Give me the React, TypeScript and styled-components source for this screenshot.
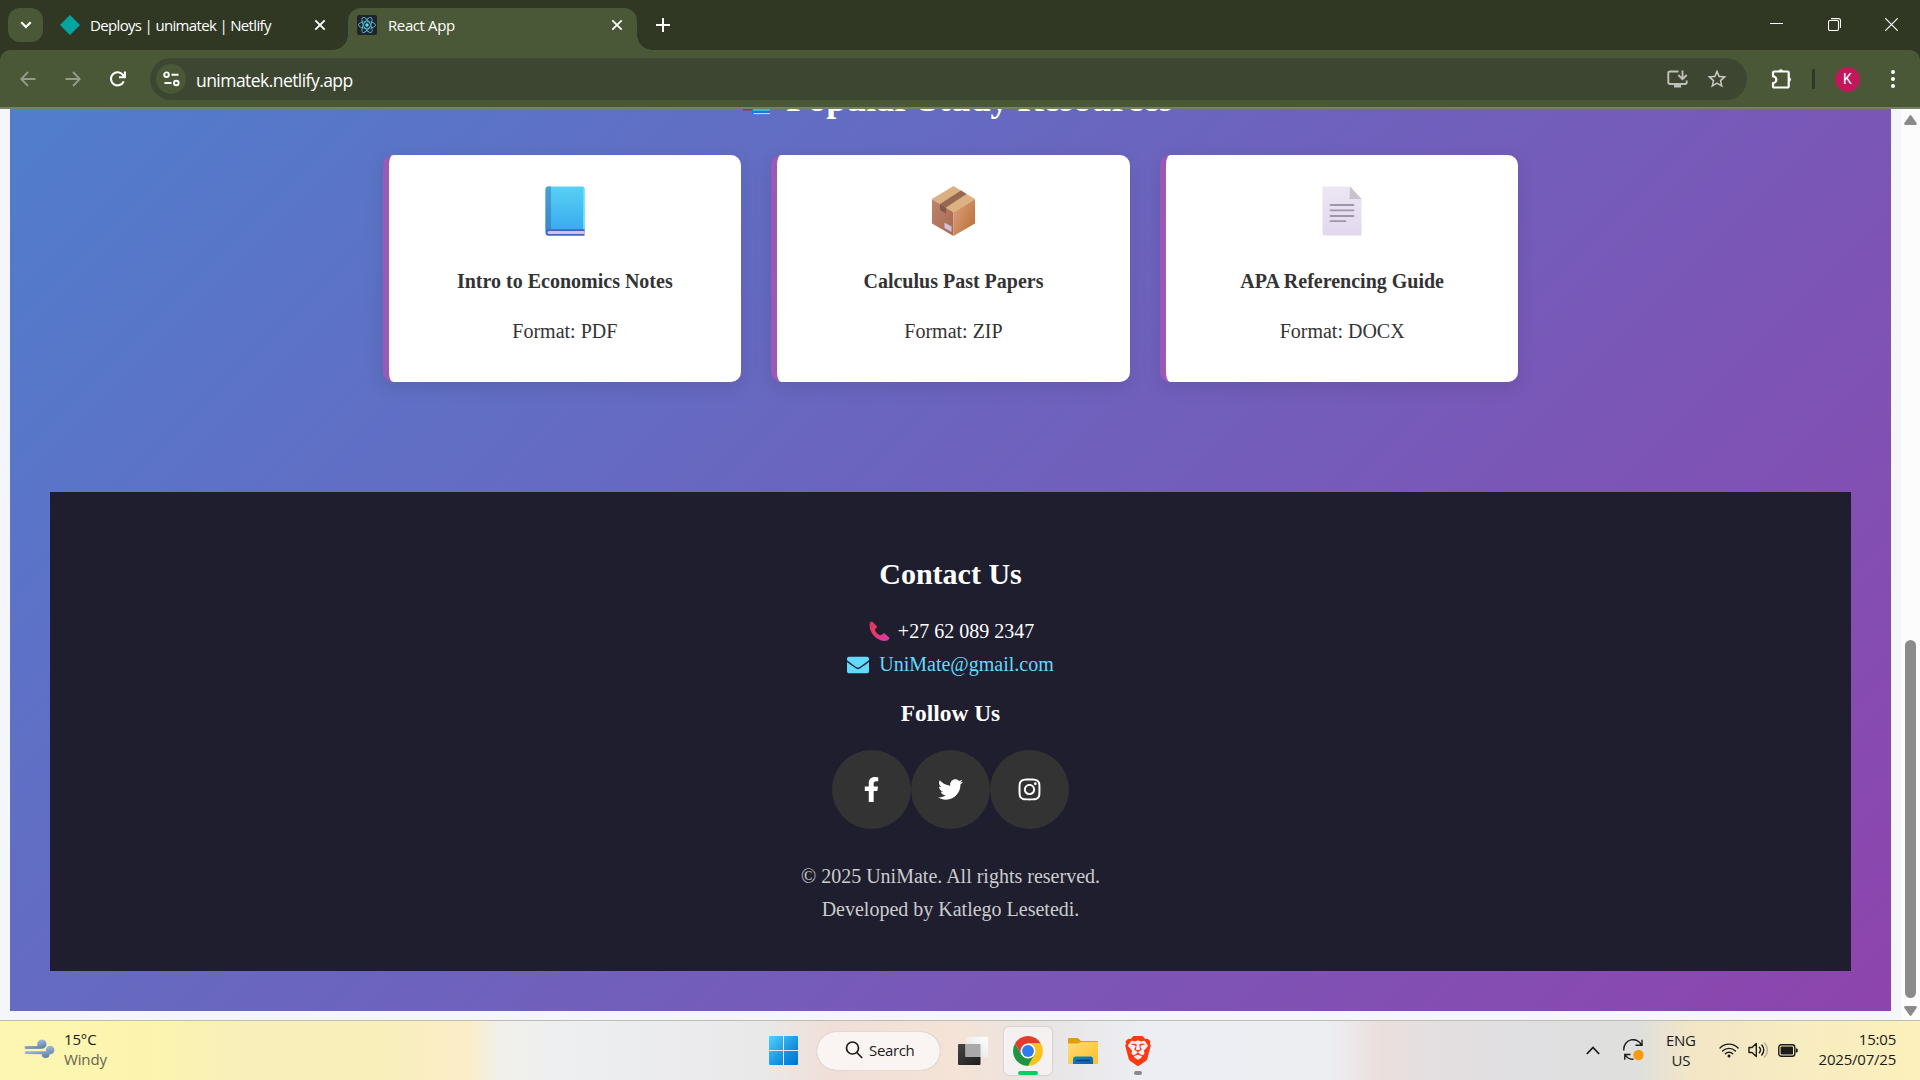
import React from "react";
import styled, { createGlobalStyle } from "styled-components";
import { FaFacebookF, FaTwitter, FaInstagram, FaEnvelope } from "react-icons/fa";
import { SiBrave } from "react-icons/si";

const GlobalStyle = createGlobalStyle`
  * { box-sizing: border-box; }
  body { margin: 0; overflow: hidden; }
`;

const UI_FONT = '"Open Sans", "Noto Sans", sans-serif';
const PAGE_FONT = '"Liberation Serif", "Times New Roman", serif';

const Screen = styled.div`
  width: 1920px;
  height: 1080px;
  display: flex;
  flex-direction: column;
  overflow: hidden;
  background: #303824;
  font-family: ${UI_FONT};
`;

/* ---------- Browser chrome ---------- */

const TabStrip = styled.div`
  height: 50px;
  display: flex;
  padding: 8px 22px 0 8px;
  color: #fff;
`;

const TabSearch = styled.div`
  width: 35px;
  height: 34px;
  border-radius: 12px;
  background: #4b5837;
  display: grid;
  place-items: center;
`;

const Tab = styled.div<{ $active?: boolean; $width: number }>`
  position: relative;
  width: ${(p) => p.$width}px;
  height: 42px;
  margin-left: ${(p) => (p.$active ? 0 : 7)}px;
  padding: ${(p) => (p.$active ? "0 14px 8px 9px" : "0 22px 8px 10px")};
  display: flex;
  align-items: center;
  border-radius: 13px 13px 0 0;
  background: ${(p) => (p.$active ? "#4b5837" : "transparent")};

  &::before,
  &::after {
    content: "";
    display: ${(p) => (p.$active ? "block" : "none")};
    position: absolute;
    bottom: 0;
    width: 15px;
    height: 15px;
  }
  &::before {
    left: -15px;
    background: radial-gradient(circle at 0 0, transparent 14.5px, #4b5837 15px);
  }
  &::after {
    right: -15px;
    background: radial-gradient(circle at 100% 0, transparent 14.5px, #4b5837 15px);
  }
`;

const TabTitle = styled.span<{ $gap: number; $spacing: number }>`
  flex: 1;
  margin-left: ${(p) => p.$gap}px;
  font-size: 15px;
  line-height: 20px;
  letter-spacing: ${(p) => p.$spacing}px;
  white-space: nowrap;
`;

const NewTab = styled.div`
  display: flex;
  margin: 10px 0 0 19px;
  height: 14px;
`;

const WindowControls = styled.div`
  margin-left: auto;
  display: flex;
  gap: 44.500px;
  padding-top: 10px;
  height: 24px;
`;

const Toolbar = styled.div`
  height: 59px;
  display: flex;
  align-items: center;
  padding: 1px 20px 0;
  background: #4b5837;
  border-bottom: 2px solid #748163;
  border-radius: 10px 10px 0 0;
`;

const NavButtons = styled.div`
  display: flex;
  gap: 29px;
  width: 130px;
`;

const Omnibox = styled.div`
  width: 1597px;
  height: 42px;
  border-radius: 21px;
  background: #3c4630;
  display: flex;
  align-items: center;
  padding: 0 20px 0 6px;
`;

const SiteButton = styled.div`
  width: 30px;
  height: 30px;
  border-radius: 50%;
  background: #4b5837;
  display: grid;
  place-items: center;
`;

const Address = styled.span`
  flex: 1;
  margin-left: 10px;
  padding-top: 1px;
  color: #fff;
  font-size: 17.5px;
  letter-spacing: -0.55px;
`;

const OmniboxActions = styled.div`
  display: flex;
  gap: 19px;
  align-items: center;
`;

const ToolbarActions = styled.div`
  flex: 1;
  display: flex;
  align-items: center;
  padding-left: 24px;
`;

const Divider = styled.div`
  width: 3px;
  height: 20px;
  margin: 0 20px 0 19px;
  border-radius: 1px;
  background: #303824;
`;

const Avatar = styled.div`
  width: 25px;
  height: 25px;
  border-radius: 50%;
  background: #c2185b;
  color: #fff;
  font: 14px/25px Roboto, sans-serif;
  text-align: center;
  margin-right: 31px;
`;

/* ---------- Page ---------- */

const Viewport = styled.div`
  height: 911px;
  display: flex;
  overflow: hidden;
  background: #f4f6f9;
`;

const Body = styled.div`
  flex: 1;
  min-width: 0;
  height: 911px;
  padding: 0 10px 9px;
  display: flex;
  flex-direction: column;
`;

const Gradient = styled.main`
  flex: 1;
  min-height: 0;
  overflow: hidden;
  display: flex;
  flex-direction: column;
  justify-content: flex-end;
  padding: 0 40px 40px;
  background: linear-gradient(135deg, #3498db, #8e44ad) bottom / 100% 2195px no-repeat;
  font-family: ${PAGE_FONT};
  font-size: 20px;
`;

const SectionTitle = styled.h2`
  flex: none;
  display: flex;
  justify-content: center;
  gap: 9px;
  margin: 0 0 35px;
  height: 42px;
  line-height: 42px;
  font-size: 36px;
  color: #fff;
`;

const CardGrid = styled.section`
  flex: none;
  width: 1136px;
  margin: 0 auto 110px;
  display: grid;
  grid-template-columns: repeat(3, 1fr);
  gap: 30px;
`;

const Card = styled.article`
  height: 227px;
  padding-top: 31px;
  display: flex;
  flex-direction: column;
  align-items: center;
  background: #fff;
  color: #333;
  border-left: 6px solid #9b59b6;
  border-radius: 10px;
  box-shadow: 0 5px 19px rgba(0, 0, 0, 0.1);
`;

const CardTitle = styled.h4`
  margin: 34px 0 27px;
  font-size: 20px;
  line-height: 23px;
`;

const CardText = styled.p`
  margin: 0;
  line-height: 23px;
`;

const Footer = styled.footer`
  flex: none;
  height: 479px;
  padding-top: 65px;
  display: flex;
  flex-direction: column;
  align-items: center;
  background: #1e1e2f;
  color: #fff;
`;

const FooterTitle = styled.h2`
  margin: 0 0 24px;
  font-size: 30px;
  line-height: 34px;
`;

const ContactLine = styled.div<{ $color?: string; $gap: number }>`
  display: flex;
  align-items: center;
  gap: ${(p) => p.$gap}px;
  height: 33px;
  line-height: 33px;
  color: ${(p) => p.$color ?? "#fff"};
`;

const FollowTitle = styled.h3`
  margin: 19px 0 23px;
  font-size: 23.4px;
  line-height: 27px;
`;

const SocialRow = styled.div`
  display: flex;
  margin-bottom: 31px;
`;

const SocialLink = styled.a`
  width: 79px;
  height: 79px;
  border-radius: 50%;
  background: #333;
  display: grid;
  place-items: center;
  font-size: 25px;

  svg { display: block; }
`;

const Legal = styled.p`
  margin: 0;
  line-height: 33px;
  color: #ccc;
`;

const Scrollbar = styled.div`
  width: 19px;
  height: 911px;
  padding: 6px 0 4px;
  background: #fcfcfc;
  display: flex;
  flex-direction: column;
  align-items: center;
`;

const Thumb = styled.div`
  width: 11px;
  height: 358px;
  margin: auto 0 8px;
  border-radius: 6px;
  background: #8b8b8b;
`;

/* ---------- Taskbar ---------- */

const Taskbar = styled.div`
  height: 60px;
  border-top: 1px solid #bdbdb4;
  display: flex;
  align-items: center;
  color: #1b1b1b;
  font-size: 15px;
  background: linear-gradient(
    90deg,
    #fdf6b2 0,
    #fcf4ae 150px,
    #f8efba 240px,
    #f9efbb 380px,
    #fbedc9 470px,
    #f1f0ea 500px,
    #eeeff1 560px,
    #e9e9ea 760px,
    #f0dfd8 830px,
    #f4e3d6 960px,
    #e8e5e5 1050px,
    #eceef3 1140px,
    #eceef2 1330px,
    #ebdfdd 1380px,
    #e4dfe0 1430px,
    #e0dfe2 1520px,
    #dfdfdd 1640px,
    #f2e6c6 1690px,
    #f8ecc2 1800px,
    #fcf0bb 1920px
  );
`;

const Weather = styled.div`
  width: 769px;
  padding: 0 0 3px 24px;
  display: flex;
  align-items: center;
  gap: 9px;
`;

const TwoLines = styled.div<{ $align?: string; $spacing?: number }>`
  line-height: 20px;
  text-align: ${(p) => p.$align ?? "left"};
  letter-spacing: ${(p) => p.$spacing ?? 0}px;
`;

const Muted = styled.div`
  color: #66644f;
`;

const SearchPill = styled.div`
  width: 123px;
  height: 38px;
  margin: 0 18px 0 19px;
  padding: 0 0 2px 28px;
  display: flex;
  align-items: center;
  gap: 6px;
  border-radius: 19px;
  background: #faf5f3;
  box-shadow: 0 0 1px rgba(0, 0, 0, 0.35);
  letter-spacing: -0.35px;
`;

const AppTile = styled.div<{ $active?: boolean }>`
  width: 48px;
  height: 48px;
  display: flex;
  flex-direction: column;
  align-items: center;
  justify-content: flex-end;
  border-radius: 5px;
  background: ${(p) => (p.$active ? "#f5f1f0" : "transparent")};
  box-shadow: ${(p) => (p.$active ? "0 0 2px rgba(0,0,0,0.25)" : "none")};
`;

const Indicator = styled.div<{ $color: string; $width: number }>`
  width: ${(p) => p.$width}px;
  height: 4px;
  margin-top: 5px;
  border-radius: 2px;
  background: ${(p) => p.$color};
`;

const Tray = styled.div`
  margin-left: auto;
  padding: 0 24px 1px 0;
  display: flex;
  align-items: center;
`;

const Spaced = styled.div<{ $left: number; $lift?: number }>`
  margin-left: ${(p) => p.$left}px;
  padding-bottom: ${(p) => p.$lift ?? 0}px;
  display: flex;
`;

/* ---------- Drawings ---------- */

const CloseGlyph = () => (
  <svg width="12" height="12" viewBox="0 0 12 12" stroke="#fff" strokeWidth="1.800" fill="none">
    <path d="M1.300 1.300l9.400 9.400M10.700 1.300l-9.400 9.400" />
  </svg>
);

const ReactLogo = () => (
  <svg width="20" height="20" viewBox="0 0 20 20">
    <rect width="20" height="20" rx="2" fill="#20232a" />
    <g fill="none" stroke="#4fb3cc" strokeWidth="0.950">
      <ellipse cx="10" cy="10" rx="8.600" ry="3.300" />
      <ellipse cx="10" cy="10" rx="8.600" ry="3.300" transform="rotate(60 10 10)" />
      <ellipse cx="10" cy="10" rx="8.600" ry="3.300" transform="rotate(120 10 10)" />
    </g>
    <circle cx="10" cy="10" r="1.700" fill="#61dafb" />
  </svg>
);

const BookIcon = () => (
  <svg width="40" height="50" viewBox="0 0 40 50">
    <defs>
      <linearGradient id="cover" x1="0" y1="0" x2="0" y2="1">
        <stop offset="0" stopColor="#57d1f3" />
        <stop offset="1" stopColor="#38a9ef" />
      </linearGradient>
      <linearGradient id="spine" x1="0" y1="0" x2="0" y2="1">
        <stop offset="0" stopColor="#4a9fd2" />
        <stop offset="1" stopColor="#3987cf" />
      </linearGradient>
    </defs>
    <path d="M3.500 .5H37a2.500 2.500 0 0 1 2.500 2.500V46H.5V3.500a3 3 0 0 1 3-3z" fill="url(#cover)" />
    <path d="M3.500 .5H6V44H.5V3.500a3 3 0 0 1 3-3z" fill="url(#spine)" />
    <path d="M38.700 2V43" stroke="#63e0fa" strokeWidth="1.400" />
    <path d="M3.500 43.200H39.500V49.700H3.500A3 3 0 0 1 .5 46.700 3.300 3.300 0 0 1 3.500 43.200z" fill="#3d66c4" />
    <path d="M4 45H39.500V48H4a1.500 1.500 0 0 1 0-3z" fill="#d5bfe8" />
  </svg>
);

const BoxIcon = () => (
  <svg width="45" height="50" viewBox="0 0 45 50">
    <defs>
      <linearGradient id="boxL" x1="0" y1="0" x2="1" y2="1">
        <stop offset="0" stopColor="#bd846f" />
        <stop offset="1" stopColor="#a9674f" />
      </linearGradient>
      <linearGradient id="boxR" x1="0" y1="0.200" x2="1" y2="1">
        <stop offset="0" stopColor="#d99c78" />
        <stop offset="1" stopColor="#b96e33" />
      </linearGradient>
    </defs>
    <path d="M1 13L22.500 26V50L1 37.500z" fill="url(#boxL)" />
    <path d="M44 13L22.500 26V50L44 37.500z" fill="url(#boxR)" />
    <path d="M22.500 0L44 13L22.500 26.500L1 13z" fill="#dcb182" />
    <path d="M30 4.500L35.500 8L15 21.500L9 18z" fill="#966851" />
    <path d="M9 18L15 21.500V27.500L9 24z" fill="#80594e" />
    <path d="M13.500 36.500L20.500 40.500V46L13.500 42z" fill="#d3c0dc" />
  </svg>
);

const PageIcon = () => (
  <svg width="40" height="50" viewBox="0 0 40 50">
    <defs>
      <linearGradient id="paper" x1="0" y1="0" x2="0" y2="1">
        <stop offset="0" stopColor="#ece6f3" />
        <stop offset="1" stopColor="#e2d8ee" />
      </linearGradient>
    </defs>
    <path d="M1.500 .5H28L39.500 13V49.500H1.500A1 1 0 0 1 .5 48.500V1.500A1 1 0 0 1 1.500 .5z" fill="url(#paper)" />
    <path d="M28 .5L39.500 13H27.500z" fill="#c9c3d0" />
    <path d="M8.500 19H31.500M8.500 24.300H31.500M8.500 30H31.500M8.500 35.200H23.500" stroke="#9d95a8" strokeWidth="1.800" strokeLinecap="round" />
  </svg>
);

const BooksIcon = () => (
  <svg width="49" height="42" viewBox="0 0 49 42">
    <path d="M15 2L33 8V31H15z" fill="#c2315b" />
    <path d="M15 30H33V32.500H15z" fill="#a92b53" />
    <path d="M24 12H42V32H24z" fill="#3a9fee" />
    <path d="M24 29H42V36.800H26A2 2 0 0 1 24 34.800z" fill="#2f6fd0" />
    <path d="M26 30H42V33H24.500z" fill="#38b0f2" />
    <path d="M25.500 35H42V36.200H25.500z" fill="#dccbf0" />
  </svg>
);

const PhoneIcon = () => (
  <svg width="25" height="26" viewBox="0 0 25 26">
    <defs>
      <linearGradient id="phone" x1="0" y1="0" x2="1" y2="1">
        <stop offset="0" stopColor="#c8356f" />
        <stop offset="0.350" stopColor="#f2355c" />
        <stop offset="1" stopColor="#d13bb4" />
      </linearGradient>
    </defs>
    <path
      d="M2.600 4.500C3 2.800 4.200 2 5.300 2.600L9.800 7.300C10.800 8.600 8 9.600 7.900 10.700C8.200 12.900 11.500 16 13.700 16.300C14.900 16.200 15.800 13.700 17.300 14.200L22 18.300C22.800 19.300 22 20.900 20.300 21.500C15 23.300 9 19.500 6.500 16.300C3.800 13 2 8 2.600 4.500z"
      fill="url(#phone)"
    />
  </svg>
);

const WindowsLogo = () => (
  <svg width="29" height="29" viewBox="0 0 29 29">
    <defs>
      <linearGradient id="win" gradientUnits="userSpaceOnUse" x1="0" y1="0" x2="29" y2="29">
        <stop offset="0" stopColor="#4fd2fb" />
        <stop offset="0.600" stopColor="#1592e0" />
        <stop offset="1" stopColor="#0072cf" />
      </linearGradient>
    </defs>
    <path d="M1 0H14V14H0V1A1 1 0 0 1 1 0zM15 0H28A1 1 0 0 1 29 1V14H15zM0 15H14V29H1A1 1 0 0 1 0 28zM15 15H29V28A1 1 0 0 1 28 29H15z" fill="url(#win)" />
  </svg>
);

const TaskViewIcon = () => (
  <svg width="30" height="28" viewBox="0 0 30 28">
    <defs>
      <linearGradient id="tv" x1="0" y1="0" x2="1" y2="1">
        <stop offset="0" stopColor="#454545" />
        <stop offset="1" stopColor="#1d1d1d" />
      </linearGradient>
      <linearGradient id="tw" x1="1" y1="0" x2="0" y2="1">
        <stop offset="0" stopColor="#fff" />
        <stop offset="1" stopColor="#dedede" />
      </linearGradient>
    </defs>
    <rect x="0" y="7" width="22.500" height="21" rx="1" fill="url(#tv)" />
    <rect x="7.500" y="0" width="22.500" height="20" rx="1" fill="url(#tw)" />
    <path d="M7.500 7H22.500V20H7.500z" fill="#a9a9a9" />
  </svg>
);

const ChromeLogo = () => (
  <svg width="30" height="30" viewBox="0 0 48 48">
    <circle cx="24" cy="24" r="24" fill="#fff" />
    <path d="M24 12H44.780A24 24 0 0 0 3.220 12L13.610 30z" fill="#e33b2e" />
    <path d="M34.390 30L24 48A24 24 0 0 0 44.780 12H24z" fill="#fcc21b" />
    <path d="M13.610 30L3.220 12A24 24 0 0 0 24 48L34.390 30z" fill="#229342" />
    <circle cx="24" cy="24" r="12" fill="#fff" />
    <circle cx="24" cy="24" r="9.500" fill="#2f7cf0" />
  </svg>
);

const FolderIcon = () => (
  <svg width="30" height="26" viewBox="0 0 30 26">
    <defs>
      <linearGradient id="fold" x1="0" y1="0" x2="1" y2="1">
        <stop offset="0" stopColor="#ffdc74" />
        <stop offset="1" stopColor="#fcbf2b" />
      </linearGradient>
      <linearGradient id="foldBlue" x1="0" y1="0" x2="1" y2="1">
        <stop offset="0" stopColor="#1187d8" />
        <stop offset="1" stopColor="#0a5fae" />
      </linearGradient>
    </defs>
    <path d="M1 0H10L13 3H29A1 1 0 0 1 30 4V12H0V1A1 1 0 0 1 1 0z" fill="#dd9e12" />
    <path d="M0 5.500H10L13 4H30V25A1 1 0 0 1 29 26H1A1 1 0 0 1 0 25z" fill="url(#fold)" />
    <path d="M5 26V21A2.500 2.500 0 0 1 7.500 18.500H22.500A2.500 2.500 0 0 1 25 21V26z" fill="url(#foldBlue)" />
    <path d="M8.500 22.500H21.500" stroke="#083f7c" strokeWidth="1.300" strokeLinecap="round" />
  </svg>
);

const BraveLogo = styled(SiBrave)`
  width: 30px;
  height: 30px;
  color: #fb3a10;
`;

const WindIcon = () => (
  <svg width="31" height="22" viewBox="0 0 31 22">
    <defs>
      <linearGradient id="wind" x1="0" y1="0" x2="0.600" y2="1">
        <stop offset="0" stopColor="#c3d6ee" />
        <stop offset="1" stopColor="#6285ad" />
      </linearGradient>
    </defs>
    <g fill="url(#wind)">
      <path d="M2 8H13.500A4.700 4.700 0 1 1 18.500 10.800L2 10.900A1.400 1.400 0 0 1 2 8z" />
      <path d="M2 13.200H22A4.300 4.300 0 1 1 25.500 16.200A3.800 3.800 0 1 1 17.800 16.200L2 16A1.400 1.400 0 0 1 2 13.200z" />
    </g>
  </svg>
);

const resources = [
  { title: "Intro to Economics Notes", format: "Format: PDF", icon: <BookIcon /> },
  { title: "Calculus Past Papers", format: "Format: ZIP", icon: <BoxIcon /> },
  { title: "APA Referencing Guide", format: "Format: DOCX", icon: <PageIcon /> },
];

const BrowserChrome = () => (
  <>
    <TabStrip>
      <TabSearch>
        <svg width="12" height="8" viewBox="0 0 12 8" fill="none" stroke="#fff" strokeWidth="2.200">
          <path d="M1.300 1.300L6 6l4.700-4.700" />
        </svg>
      </TabSearch>
      <Tab $width={298}>
        <svg width="20" height="20" viewBox="0 0 20 20">
          <path d="M10 .3L19.700 10L10 19.700L.3 10z" fill="#05a5a0" stroke="#05a5a0" strokeWidth=".6" strokeLinejoin="round" />
        </svg>
        <TabTitle $gap={10} $spacing={-0.66}>Deploys | unimatek | Netlify</TabTitle>
        <CloseGlyph />
      </Tab>
      <Tab $active $width={289}>
        <ReactLogo />
        <TabTitle $gap={11} $spacing={-0.4}>React App</TabTitle>
        <CloseGlyph />
      </Tab>
      <NewTab>
        <svg width="14" height="14" viewBox="0 0 14 14" stroke="#fff" strokeWidth="2">
          <path d="M7 0V14M0 7H14" />
        </svg>
      </NewTab>
      <WindowControls>
        <svg width="13" height="13" viewBox="0 0 13 13" stroke="#fff"><path d="M0 5.500H13" /></svg>
        <svg width="13" height="13" viewBox="0 0 13 13" fill="none" stroke="#fff" strokeWidth="1.100">
          <rect x=".5" y="2.500" width="10" height="10" rx="1.500" />
          <path d="M3 .6H10.500A2 2 0 0 1 12.500 2.600V10" />
        </svg>
        <svg width="13" height="13" viewBox="0 0 13 13" stroke="#fff" strokeWidth="1.200"><path d="M0 0L13 13M13 0L0 13" /></svg>
      </WindowControls>
    </TabStrip>
    <Toolbar>
      <NavButtons>
        <svg width="16" height="16" viewBox="0 0 16 16" fill="none" stroke="#949c87" strokeWidth="1.800"><path d="M15.500 8H1.500M8 1L1.200 8L8 15" /></svg>
        <svg width="16" height="16" viewBox="0 0 16 16" fill="none" stroke="#949c87" strokeWidth="1.800"><path d="M.5 8H14.500M8 1L14.800 8L8 15" /></svg>
        <svg width="16" height="16" viewBox="0 0 16 16" fill="none" stroke="#fff" strokeWidth="2.100">
          <path d="M13.700 10.300A6.600 6.600 0 1 1 13 4L14.600 6" />
          <path d="M14.900 .5V6.300H9" />
        </svg>
      </NavButtons>
      <Omnibox>
        <SiteButton>
          <svg width="17" height="16" viewBox="0 0 17 16" fill="none" stroke="#fff" strokeWidth="1.900">
            <circle cx="3.500" cy="3.700" r="2.300" />
            <path d="M8.500 3.700H15.500M1.500 12H8.500" />
            <circle cx="13.300" cy="12" r="2.300" />
          </svg>
        </SiteButton>
        <Address>unimatek.netlify.app</Address>
        <OmniboxActions>
          <svg width="21" height="20" viewBox="0 0 21 20" fill="none" stroke="#bfc0bc" strokeWidth="1.900">
            <path d="M11.500 2.500H3A1.700 1.700 0 0 0 1.300 4.200V13.300A1.700 1.700 0 0 0 3 15H18A1.700 1.700 0 0 0 19.700 13.300V11.500" />
            <path d="M15.500 1.500V9.500M11.300 6L15.500 10.200L19.700 6" />
            <path d="M7 15.500H14V18.500H7z" fill="#bfc0bc" stroke="none" />
          </svg>
          <svg width="20" height="20" viewBox="1.500 1.500 21 21" fill="#c9cac6">
            <path d="M22 9.240l-7.190-.62L12 2 9.190 8.630 2 9.240l5.460 4.730L5.820 21 12 17.270 18.180 21l-1.630-7.030L22 9.240zM12 15.400l-3.760 2.270 1-4.280-3.320-2.880 4.380-.38L12 6.100l1.710 4.040 4.380.38-3.320 2.880 1 4.280L12 15.400z" />
          </svg>
        </OmniboxActions>
      </Omnibox>
      <ToolbarActions>
        <svg width="22" height="22" viewBox="0 0 22 22" fill="none" stroke="#fff" strokeWidth="2.200" strokeLinejoin="round">
          <path d="M3.200 3.500H16.500A1.200 1.200 0 0 1 17.700 4.700V18.300A1.200 1.200 0 0 1 16.500 19.500H3.200A1.200 1.200 0 0 1 2 18.300V15A3.200 3.200 0 0 0 2 8.300V4.700A1.200 1.200 0 0 1 3.200 3.500z" />
          <path d="M7.300 3A2.700 2.700 0 0 1 12.300 3zM18.300 9A2.700 2.700 0 0 1 18.300 14z" fill="#fff" stroke="none" />
        </svg>
        <Divider />
        <Avatar>K</Avatar>
        <svg width="4" height="18" viewBox="0 0 4 18" fill="#fff">
          <circle cx="2" cy="2" r="2" /><circle cx="2" cy="9" r="2" /><circle cx="2" cy="16" r="2" />
        </svg>
      </ToolbarActions>
    </Toolbar>
  </>
);

const Page = () => (
  <Viewport>
    <Body>
      <Gradient>
        <SectionTitle>
          <BooksIcon />
          Popular Study Resources
        </SectionTitle>
        <CardGrid>
          {resources.map((r) => (
            <Card key={r.title}>
              {r.icon}
              <CardTitle>{r.title}</CardTitle>
              <CardText>{r.format}</CardText>
            </Card>
          ))}
        </CardGrid>
        <Footer>
          <FooterTitle>Contact Us</FooterTitle>
          <ContactLine $gap={6}>
            <PhoneIcon />
            +27 62 089 2347
          </ContactLine>
          <ContactLine $gap={10} $color="#61dafb">
            <FaEnvelope size={22} />
            UniMate@gmail.com
          </ContactLine>
          <FollowTitle>Follow Us</FollowTitle>
          <SocialRow>
            <SocialLink><FaFacebookF /></SocialLink>
            <SocialLink><FaTwitter /></SocialLink>
            <SocialLink><FaInstagram /></SocialLink>
          </SocialRow>
          <Legal>© 2025 UniMate. All rights reserved.</Legal>
          <Legal>Developed by Katlego Lesetedi.</Legal>
        </Footer>
      </Gradient>
    </Body>
    <Scrollbar>
      <svg width="13" height="10" viewBox="0 0 13 10"><path d="M5.500 .8a1.200 1.200 0 0 1 2 0L12.600 8a1.200 1.200 0 0 1-1 1.900H1.400A1.200 1.200 0 0 1 .4 8z" fill="#8b8b8b" /></svg>
      <Thumb />
      <svg width="13" height="10" viewBox="0 0 13 10"><path d="M5.500 9.200a1.200 1.200 0 0 0 2 0L12.600 2a1.200 1.200 0 0 0-1-1.900H1.400A1.200 1.200 0 0 0 .4 2z" fill="#8b8b8b" /></svg>
    </Scrollbar>
  </Viewport>
);

const SystemTaskbar = () => (
  <Taskbar>
    <Weather>
      <WindIcon />
      <TwoLines $spacing={-0.15}>
        <div>15°C</div>
        <Muted>Windy</Muted>
      </TwoLines>
    </Weather>
    <WindowsLogo />
    <SearchPill>
      <svg width="18" height="18" viewBox="0 0 18 18" fill="none" stroke="#1b1b1b" strokeWidth="1.700">
        <circle cx="7.500" cy="7" r="6" />
        <path d="M11.800 11.500L17.200 17" />
      </svg>
      Search
    </SearchPill>
    <TaskViewIcon />
    <Spaced $left={16}>
      <AppTile $active>
        <ChromeLogo />
        <Indicator $color="#05cf63" $width={20} />
      </AppTile>
    </Spaced>
    <Spaced $left={16}>
      <FolderIcon />
    </Spaced>
    <Spaced $left={16}>
      <AppTile>
        <BraveLogo />
        <Indicator $color="#8a8a8c" $width={8} />
      </AppTile>
    </Spaced>
    <Tray>
      <svg width="14" height="9" viewBox="0 0 14 9" fill="none" stroke="#1b1b1b" strokeWidth="1.800"><path d="M.8 8L7 1.500L13.200 8" /></svg>
      <Spaced $left={23}>
        <svg width="21" height="22" viewBox="0 0 21 22" fill="none" stroke="#1b1b1b" strokeWidth="1.400">
          <path d="M.8 11.500V10A9.300 9.300 0 0 1 18.500 6M19 .8V6.300H12.500" />
          <path d="M1.800 20.800V15.500H7.500M2 15.800A10 10 0 0 0 10.500 20.300" />
          <circle cx="15.500" cy="16" r="5.200" fill="#fb9a0c" stroke="none" />
        </svg>
      </Spaced>
      <Spaced $left={22} $lift={1}>
        <TwoLines $align="center" $spacing={-0.35}>
          <div>ENG</div>
          <div>US</div>
        </TwoLines>
      </Spaced>
      <Spaced $left={23}>
        <svg width="20" height="16" viewBox="0 0 20 16" fill="none" stroke="#1b1b1b" strokeWidth="1.400" strokeLinecap="round">
          <path d="M1 6A12.500 12.500 0 0 1 19 6M3.600 9A9 9 0 0 1 16.400 9M6.300 11.800A5.200 5.200 0 0 1 13.700 11.800" />
          <circle cx="10" cy="14" r="1.500" fill="#1b1b1b" stroke="none" />
        </svg>
      </Spaced>
      <Spaced $left={9}>
        <svg width="21" height="16" viewBox="0 0 21 16" fill="none" stroke="#1b1b1b" strokeWidth="1.400" strokeLinecap="round">
          <path d="M1 5.500H4L8.300 1.500V14.500L4 10.500H1z" strokeLinejoin="round" />
          <path d="M11.300 5.300A4 4 0 0 1 11.300 10.700M13.800 3A7.400 7.400 0 0 1 13.800 13" />
          <path d="M16.500 1A10 10 0 0 1 16.500 15" stroke="#b5ad96" />
        </svg>
      </Spaced>
      <Spaced $left={9}>
        <svg width="20" height="13" viewBox="0 0 20 13">
          <rect x=".8" y=".8" width="16" height="11.400" rx="2.500" fill="none" stroke="#1b1b1b" strokeWidth="1.400" />
          <rect x="2.600" y="2.600" width="12.400" height="7.800" rx="1" fill="#1b1b1b" />
          <path d="M17.800 4.500H18.500A1.200 1.200 0 0 1 19.700 5.700V7.300A1.200 1.200 0 0 1 18.500 8.500H17.800z" fill="#1b1b1b" />
        </svg>
      </Spaced>
      <Spaced $left={21} $lift={3}>
        <TwoLines $align="right" $spacing={-0.22}>
          <div>15:05</div>
          <div>2025/07/25</div>
        </TwoLines>
      </Spaced>
    </Tray>
  </Taskbar>
);

export default function App() {
  return (
    <Screen>
      <GlobalStyle />
      <BrowserChrome />
      <Page />
      <SystemTaskbar />
    </Screen>
  );
}
